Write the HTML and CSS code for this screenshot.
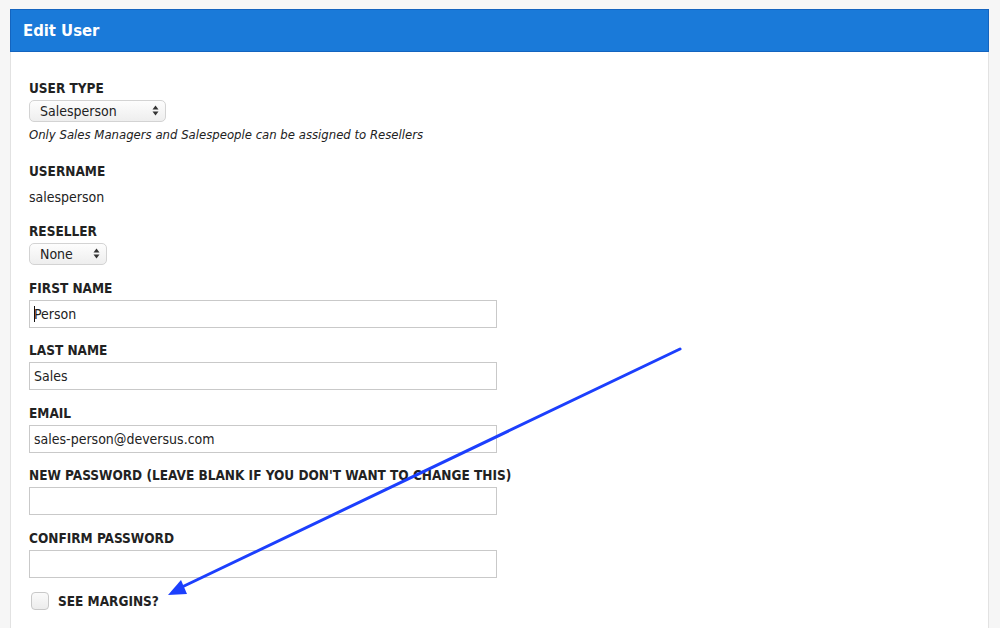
FILE: index.html
```html
<!DOCTYPE html>
<html>
<head>
<meta charset="utf-8">
<link rel="stylesheet" href="styles.css">
</head>
<body>
<div class="panel">
  <div class="panel-head">Edit User</div>
  <form class="panel-body">
    <div class="field">
      <label class="lbl">USER TYPE</label>
      <span class="select-wrap">
        <select class="select sel-type"><option>Salesperson</option></select>
        <svg class="updown" width="7" height="11" viewBox="0 0 7 11"><path d="M3.5 0.5 L6.5 4.5 L0.5 4.5 Z M3.5 10.5 L6.5 6.5 L0.5 6.5 Z" fill="#333"/></svg>
      </span>
      <div class="help">Only Sales Managers and Salespeople can be assigned to Resellers</div>
    </div>
    <div class="field">
      <label class="lbl">USERNAME</label>
      <div class="value">salesperson</div>
    </div>
    <div class="field">
      <label class="lbl">RESELLER</label>
      <span class="select-wrap">
        <select class="select sel-res"><option>None</option></select>
        <svg class="updown" width="7" height="11" viewBox="0 0 7 11"><path d="M3.5 0.5 L6.5 4.5 L0.5 4.5 Z M3.5 10.5 L6.5 6.5 L0.5 6.5 Z" fill="#333"/></svg>
      </span>
    </div>
    <div class="field">
      <label class="lbl">FIRST NAME</label>
      <span class="input-wrap">
        <input class="text" type="text" value="Person">
        <span class="caret"></span>
      </span>
    </div>
    <div class="field">
      <label class="lbl">LAST NAME</label>
      <input class="text" type="text" value="Sales">
    </div>
    <div class="field">
      <label class="lbl">EMAIL</label>
      <input class="text" type="text" value="sales-person@deversus.com">
    </div>
    <div class="field">
      <label class="lbl">NEW PASSWORD (LEAVE BLANK IF YOU DON'T WANT TO CHANGE THIS)</label>
      <input class="text" type="password" value="">
    </div>
    <div class="field">
      <label class="lbl">CONFIRM PASSWORD</label>
      <input class="text" type="password" value="">
    </div>
    <div class="check-row">
      <span class="checkbox"></span>
      <span class="lbl">SEE MARGINS?</span>
    </div>
  </form>
</div>
<svg class="annot" width="1000" height="628" viewBox="0 0 1000 628">
  <line x1="680" y1="349" x2="182" y2="587" stroke="#1c3ffd" stroke-width="3" stroke-linecap="round"/>
  <polygon points="168,595 187,594 181,580" fill="#1c3ffd"/>
</svg>
</body>
</html>
```
FILE: styles.css
```css
html, body {
  margin: 0;
  padding: 0;
}
body {
  background: #f6f6f6;
  padding: 9px 11px 0 10px;
  height: 628px;
  box-sizing: border-box;
  overflow: hidden;
  font-family: "DejaVu Sans Condensed", "DejaVu Sans", sans-serif;
  color: #222;
  position: relative;
}
.panel {
  background: #fff;
  border: 1px solid #e2e2e2;
  border-bottom: none;
  height: 640px;
}
.panel-head {
  background: #1a7ad9;
  border: 1px solid #1464bf;
  margin: -1px -1px 0 -1px;
  height: 41px;
  box-sizing: content-box;
  color: #fff;
  font-weight: bold;
  font-size: 16.5px;
  line-height: 42px;
  padding-left: 12px;
}
.panel-body {
  margin: 0;
  padding: 28px 18px 0 18px;
}
.field {
  margin-bottom: 14.5px;
}
.lbl {
  display: block;
  font-size: 13.5px;
  font-weight: bold;
  line-height: 16px;
  margin-bottom: 4px;
  color: #222;
}
.select-wrap {
  position: relative;
  display: inline-block;
  vertical-align: top;
}
.select {
  -webkit-appearance: none;
  appearance: none;
  display: block;
  height: 22px;
  border: 1px solid #d3d3d3;
  border-radius: 5px;
  background: linear-gradient(#fdfdfd, #eeeeee);
  font-family: "DejaVu Sans Condensed", "DejaVu Sans", sans-serif;
  font-size: 14px;
  color: #222;
  padding: 0 0 0 10px;
  margin: 0;
  line-height: 20px;
}
.sel-type { width: 137px; }
.sel-res { width: 78px; }
.updown {
  position: absolute;
  right: 7px;
  top: 5px;
  pointer-events: none;
}
.help {
  font-style: italic;
  font-size: 13px;
  line-height: 18px;
  margin-top: 4px;
  padding-bottom: 4px;
}
.value {
  font-size: 14px;
  line-height: 26px;
  padding-top: 1px;
  margin-bottom: -1px;
}
.input-wrap {
  position: relative;
  display: block;
  width: 468px;
}
.caret {
  position: absolute;
  left: 5px;
  top: 6px;
  width: 1px;
  height: 16px;
  background: #111;
}
.text {
  display: block;
  box-sizing: border-box;
  width: 468px;
  height: 28px;
  border: 1px solid #c9c9c9;
  border-radius: 0;
  padding: 0 4px;
  margin: 0;
  font-family: "DejaVu Sans Condensed", "DejaVu Sans", sans-serif;
  font-size: 14px;
  color: #222;
  background: #fff;
  outline: none;
}
.check-row {
  display: flex;
  align-items: center;
  margin-top: 0;
  padding-left: 2px;
}
.checkbox {
  display: inline-block;
  width: 18px;
  height: 18px;
  box-sizing: border-box;
  border: 1px solid #c8c8c8;
  border-radius: 4px;
  background: linear-gradient(#fafafa, #ececec);
  margin-right: 9px;
}
.check-row .lbl {
  margin: 0;
}
.annot {
  position: absolute;
  left: 0;
  top: 0;
  pointer-events: none;
}
```
